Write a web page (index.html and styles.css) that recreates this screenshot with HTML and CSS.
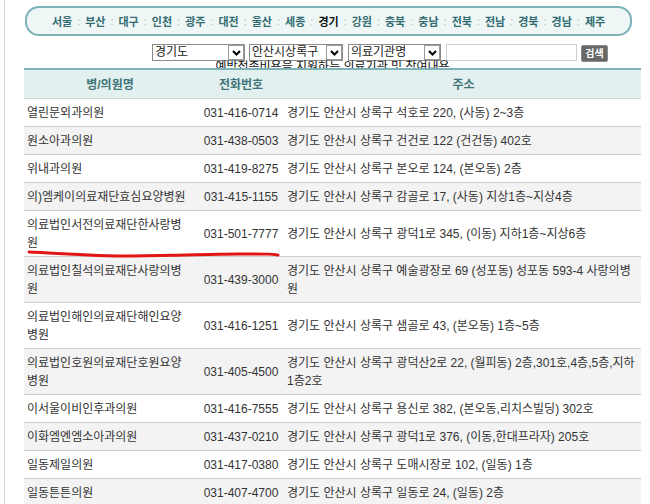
FILE: index.html
```html
<!DOCTYPE html>
<html lang="ko">
  <head>
    <meta charset="UTF-8" />
    <meta name="viewport" content="width=device-width, initial-scale=1.0" />
    <title>예방접종 지원 의료기관</title>
    <link rel="stylesheet" href="styles.css">
  </head>
  <body>
    <div class="page">
      <div class="area-tabs">
        <a>서울</a><span class="sep">:</span>
        <a>부산</a><span class="sep">:</span>
        <a>대구</a><span class="sep">:</span>
        <a>인천</a><span class="sep">:</span>
        <a>광주</a><span class="sep">:</span>
        <a>대전</a><span class="sep">:</span>
        <a>울산</a><span class="sep">:</span>
        <a>세종</a><span class="sep">:</span>
        <a class="on">경기</a><span class="sep">:</span>
        <a>강원</a><span class="sep">:</span>
        <a>충북</a><span class="sep">:</span>
        <a>충남</a><span class="sep">:</span>
        <a>전북</a><span class="sep">:</span>
        <a>전남</a><span class="sep">:</span>
        <a>경북</a><span class="sep">:</span>
        <a>경남</a><span class="sep">:</span>
        <a>제주</a>
      </div>

      <div class="search">
        <div class="sel sel-sido">
          <span class="val">경기도</span>
          <span class="arr"><svg width="9" height="6" viewBox="0 0 9 6"><path d="M1 1 L4.5 4.5 L8 1" fill="none" stroke="#000" stroke-width="2"/></svg></span>
        </div>
        <div class="sel sel-gu">
          <span class="val">안산시상록구</span>
          <span class="arr"><svg width="9" height="6" viewBox="0 0 9 6"><path d="M1 1 L4.5 4.5 L8 1" fill="none" stroke="#000" stroke-width="2"/></svg></span>
        </div>
        <div class="sel sel-type">
          <span class="val">의료기관명</span>
          <span class="arr"><svg width="9" height="6" viewBox="0 0 9 6"><path d="M1 1 L4.5 4.5 L8 1" fill="none" stroke="#000" stroke-width="2"/></svg></span>
        </div>
        <div class="keyword"></div>
        <button class="btn-search" type="button">검색</button>
      </div>

      <div class="caption">예방접종비용을 지원하는 의료기관 및 참여내용</div>

      <table class="list">
        <colgroup>
          <col class="c-name" />
          <col class="c-tel" />
          <col />
        </colgroup>
        <thead>
          <tr>
            <th>병/의원명</th>
            <th>전화번호</th>
            <th>주소</th>
          </tr>
        </thead>
        <tbody>
          <tr><td>열린문외과의원</td><td class="tel">031-416-0714</td><td>경기도 안산시 상록구 석호로 220, (사동) 2~3층</td></tr>
          <tr><td>원소아과의원</td><td class="tel">031-438-0503</td><td>경기도 안산시 상록구 건건로 122 (건건동) 402호</td></tr>
          <tr><td>위내과의원</td><td class="tel">031-419-8275</td><td>경기도 안산시 상록구 본오로 124, (본오동) 2층</td></tr>
          <tr><td>의)엠케이의료재단효심요양병원</td><td class="tel">031-415-1155</td><td>경기도 안산시 상록구 감골로 17, (사동) 지상1층~지상4층</td></tr>
          <tr><td>의료법인서전의료재단한사랑병원</td><td class="tel">031-501-7777</td><td>경기도 안산시 상록구 광덕1로 345, (이동) 지하1층~지상6층</td></tr>
          <tr><td>의료법인칠석의료재단사랑의병원</td><td class="tel">031-439-3000</td><td>경기도 안산시 상록구 예술광장로 69 (성포동) 성포동 593-4 사랑의병원</td></tr>
          <tr><td>의료법인해인의료재단해인요양병원</td><td class="tel">031-416-1251</td><td>경기도 안산시 상록구 샘골로 43, (본오동) 1층~5층</td></tr>
          <tr><td>의료법인호원의료재단호원요양병원</td><td class="tel">031-405-4500</td><td>경기도 안산시 상록구 광덕산2로 22, (월피동) 2층,301호,4층,5층,지하 1층2호</td></tr>
          <tr><td>이서울이비인후과의원</td><td class="tel">031-416-7555</td><td>경기도 안산시 상록구 용신로 382, (본오동,리치스빌딩) 302호</td></tr>
          <tr><td>이화엠엔엠소아과의원</td><td class="tel">031-437-0210</td><td>경기도 안산시 상록구 광덕1로 376, (이동,한대프라자) 205호</td></tr>
          <tr><td>일동제일의원</td><td class="tel">031-417-0380</td><td>경기도 안산시 상록구 도매시장로 102, (일동) 1층</td></tr>
          <tr><td>일동튼튼의원</td><td class="tel">031-407-4700</td><td>경기도 안산시 상록구 일동로 24, (일동) 2층</td></tr>
        </tbody>
      </table>

      <!-- red pen mark under 한사랑병원 -->
      <svg class="mark" width="262" height="12" viewBox="0 0 262 12">
        <path d="M2 4 C 30 5, 60 8, 105 8 S 180 6, 212 6 S 244 6, 251 7" fill="none" stroke="#e21414" stroke-width="3" stroke-linecap="round"/>
      </svg>
    </div>
  </body>
</html>
```

FILE: styles.css
```css
* {
  box-sizing: border-box;
  margin: 0;
  padding: 0;
}
body {
  font-family: "Liberation Sans", "Noto Sans CJK KR", sans-serif;
  font-size: 12px;
  color: #333;
  background: #fff;
}
.page {
  position: relative;
  margin-left: 4px;
  border-left: 1px solid #d4d4d4;
  min-height: 504px;
  padding-top: 6px;
}

/* 지역 탭 */
.area-tabs {
  margin-left: 20px;
  width: 607px;
  height: 30px;
  border: 2px solid #7db3b8;
  border-radius: 14px;
  background: #eef6f6;
  display: flex;
  align-items: center;
  justify-content: center;
  font-size: 11px;
  font-weight: bold;
}
.area-tabs a {
  color: #336d72;
  text-decoration: none;
}
.area-tabs a.on {
  color: #111;
}
.area-tabs .sep {
  color: #b9b9b9;
  font-weight: normal;
  margin: 0 5px;
}

/* 검색 */
.search {
  display: flex;
  align-items: flex-start;
  margin-top: 8px;
  padding-left: 147px;
  height: 17px;
}
.sel {
  display: flex;
  align-items: stretch;
  height: 17px;
  border: 1px solid #8c8c8c;
  background: #fff;
  color: #222;
}
.sel .val {
  flex: 1;
  padding-left: 2px;
  line-height: 15px;
}
.sel .arr {
  width: 16px;
  border: 1px solid #9a9a9a;
  display: flex;
  align-items: center;
  justify-content: center;
}
.sel-sido {
  width: 93px;
}
.sel-gu {
  width: 94px;
  margin-left: 4px;
}
.sel-type {
  width: 93px;
  margin-left: 5px;
}
.keyword {
  width: 131px;
  height: 17px;
  margin-left: 5px;
  border: 1px solid #cfcfcf;
  background: #fff;
}
.btn-search {
  width: 27px;
  height: 17px;
  margin: 1px 0 0 4px;
  border: 1px solid #8a8a8a;
  border-radius: 2px;
  background: #686868;
  color: #fff;
  font-family: inherit;
  font-size: 10px;
  font-weight: bold;
  line-height: 15px;
}

.caption {
  text-align: center;
  margin-left: 19px;
  width: 617px;
  line-height: 14px;
  margin-top: -1px;
  color: #111;
}

/* 목록 */
.list {
  position: relative;
  margin-left: 19px;
  margin-top: -6px;
  width: 617px;
  table-layout: fixed;
  border-collapse: collapse;
  border-top: 2px solid #7db3b8;
}
.list .c-name {
  width: 172px;
}
.list .c-tel {
  width: 90px;
}
.list th {
  height: 29px;
  background: #e3f0f0;
  color: #3f7478;
  font-size: 12px;
  font-weight: bold;
  border-bottom: 1px solid #c9d6d6;
}
.list td {
  padding: 5px 10px 4px 3px;
  line-height: 18px;
  vertical-align: middle;
  border-bottom: 1px solid #cccccc;
  word-break: break-all;
}
.list td:last-child {
  padding-left: 1px;
  padding-right: 2px;
  word-break: normal;
}
.list td.tel {
  text-align: center;
  padding-left: 0;
  padding-right: 0;
}
.list tbody tr:nth-child(even) td {
  background: #f3f3f3;
}

.mark {
  position: absolute;
  left: 22px;
  top: 248px;
}
```
